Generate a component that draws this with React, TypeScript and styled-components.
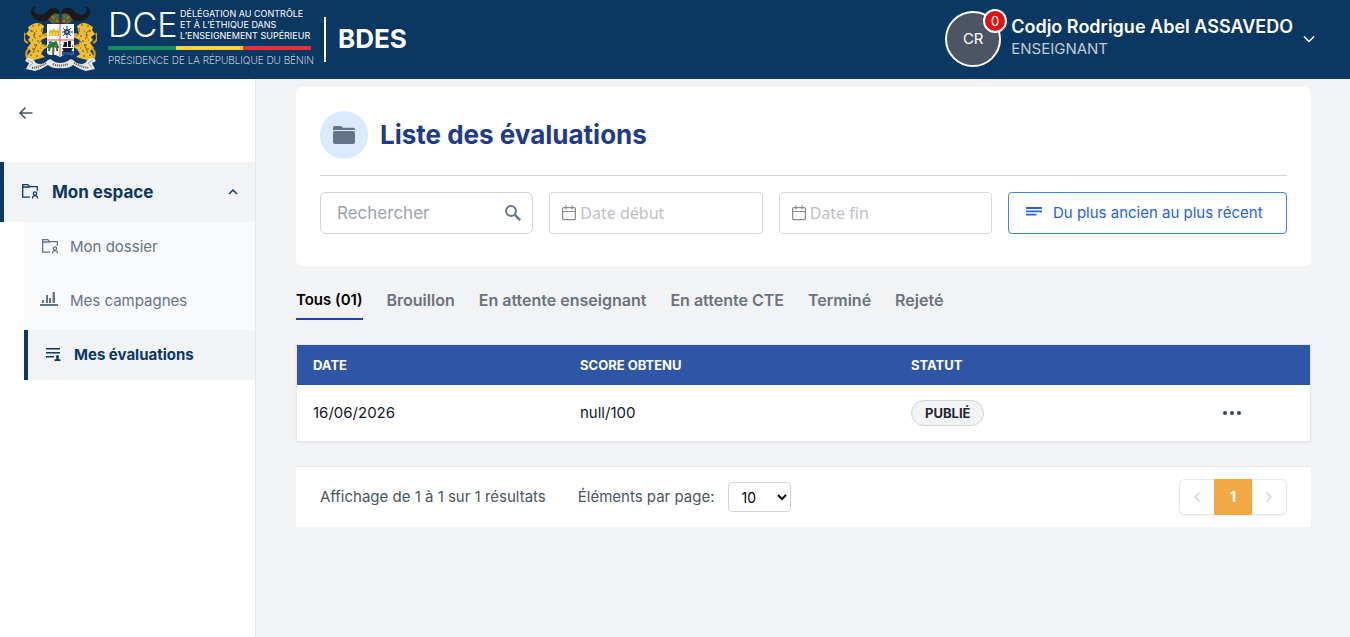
import React from "react";
import styled, { createGlobalStyle } from "styled-components";

const GlobalStyle = createGlobalStyle`
  *, *::before, *::after { box-sizing: border-box; }
  body {
    margin: 0;
    background: #f2f3f5;
    color: #111827;
    font-family: Inter, "Liberation Sans", sans-serif;
    font-size: 15px;
    line-height: 20px;
  }
  button, input, select { font: inherit; color: inherit; }
  button { cursor: pointer; }
  svg { display: block; flex: none; }
`;

const Page = styled.div`
  min-height: 100vh;
  display: flex;
  flex-direction: column;
`;

const Header = styled.header`
  display: flex;
  align-items: center;
  justify-content: space-between;
  height: 79px;
  padding: 0 35px 2px 24px;
  background: #0b3763;
  color: #fff;
`;

const Brand = styled.a`
  display: flex;
  align-items: center;
  color: inherit;
  text-decoration: none;
`;

const Wordmark = styled.div`
  width: 203px;
  margin: 0 13px 0 11px;
  padding-bottom: 4px;
`;

const WordmarkTop = styled.div`
  display: flex;
  align-items: center;
  justify-content: space-between;
  height: 34px;
  white-space: nowrap;
`;

const Acronym = styled.span`
  font-size: 34px;
  font-weight: 300;
  line-height: 34px;
`;

const Ministry = styled.span`
  width: 131px;
  font-size: 9px;
  line-height: 11px;
`;

const Flag = styled.div`
  display: grid;
  grid-template-columns: repeat(3, 1fr);
  height: 4px;
  margin: 4px 0;
`;

const Stripe = styled.span<{ $color: string }>`
  background: ${(p) => p.$color};
`;

const Presidency = styled.div`
  font-size: 10px;
  font-weight: 200;
  line-height: 12px;
  white-space: nowrap;
`;

const AppName = styled.strong`
  height: 45px;
  margin-top: 2px;
  padding-left: 12px;
  border-left: 2px solid #fff;
  font-size: 26px;
  font-weight: 700;
  line-height: 44px;
`;

const Account = styled.button`
  display: flex;
  align-items: center;
  gap: 10px;
  padding: 0;
  border: 0;
  background: none;
  text-align: left;
`;

const Avatar = styled.span`
  position: relative;
  display: grid;
  place-items: center;
  width: 56px;
  height: 56px;
  border: 2px solid #fff;
  border-radius: 50%;
  background: #4b5563;
`;

const Badge = styled.span`
  position: absolute;
  top: -4px;
  right: -8px;
  display: grid;
  place-items: center;
  width: 24px;
  height: 24px;
  border: 2px solid #fff;
  border-radius: 50%;
  background: #dc1414;
  font-size: 13px;
`;

const Identity = styled.span`
  display: flex;
  flex-direction: column;
  gap: 2px;
  padding-bottom: 2px;
`;

const UserName = styled.span`
  font-size: 18px;
  font-weight: 600;
`;

const UserRole = styled.span`
  font-size: 15px;
  color: #c3cad3;
`;

const Body = styled.div`
  flex: 1;
  display: flex;
`;

const Sidebar = styled.aside`
  flex: none;
  width: 256px;
  border-right: 1px solid #e5e7eb;
  background: #fff;
`;

const BackButton = styled.button`
  display: block;
  margin: 26px 0 41px 18px;
  padding: 0;
  border: 0;
  background: none;
  color: #4b5563;
`;

const Section = styled.button`
  display: flex;
  align-items: center;
  gap: 14px;
  width: 100%;
  height: 60px;
  padding: 0 16px;
  border: 0;
  border-left: 4px solid #0b3763;
  background: #f2f3f5;
  color: #0b3763;
  font-size: 17px;
  font-weight: 700;
  text-align: left;
`;

const SectionLabel = styled.span`
  flex: 1;
`;

const SubMenu = styled.nav`
  display: flex;
  flex-direction: column;
  gap: 4px;
  margin-left: 24px;
  background: #f9fafc;
`;

const SubLink = styled.a<{ $active?: boolean }>`
  display: flex;
  align-items: center;
  gap: 12px;
  height: 50px;
  padding-left: 16px;
  border-left: ${(p) => (p.$active ? "4px solid #0b3763" : "0")};
  background: ${(p) => (p.$active ? "#f2f3f5" : "transparent")};
  color: ${(p) => (p.$active ? "#0b3763" : "#64748b")};
  font-weight: ${(p) => (p.$active ? 700 : 400)};
  text-decoration: none;
`;

const Main = styled.main`
  flex: 1;
  min-width: 0;
  display: flex;
  flex-direction: column;
  gap: 24px;
  padding: 8px 39px 40px 40px;
`;

const Card = styled.section`
  padding: 24px 24px 32px;
  border-radius: 6px;
  background: #fff;
`;

const CardHead = styled.div`
  display: flex;
  align-items: center;
  gap: 12px;
  padding-bottom: 16px;
  margin-bottom: 16px;
  border-bottom: 1px solid #d1d5db;
`;

const RoundIcon = styled.span`
  display: grid;
  place-items: center;
  width: 48px;
  height: 48px;
  border-radius: 50%;
  background: #dbeafe;
  color: #64748b;
`;

const Title = styled.h1`
  margin: 0;
  color: #1e3a8a;
  font-size: 26px;
  font-weight: 700;
  line-height: 32px;
`;

const Filters = styled.form`
  display: grid;
  grid-template-columns: repeat(3, minmax(0, 1fr)) 279px;
  gap: 16px;
`;

const Field = styled.label<{ $search?: boolean }>`
  display: flex;
  align-items: center;
  gap: 4px;
  height: 42px;
  padding: ${(p) => (p.$search ? "0 10px 0 16px" : "0 12px")};
  border: 1px solid ${(p) => (p.$search ? "#d1d5db" : "#d9d9d9")};
  border-radius: ${(p) => (p.$search ? 6 : 4)}px;
  color: ${(p) => (p.$search ? "#64748b" : "#8c8c8c")};
`;

const TextInput = styled.input<{ $date?: boolean }>`
  flex: 1;
  min-width: 0;
  padding: 0;
  border: 0;
  outline: 0;
  background: none;
  font-family: ${(p) => (p.$date ? '"Noto Sans", sans-serif' : "inherit")};
  font-size: ${(p) => (p.$date ? 16 : 17)}px;
  &::placeholder {
    color: ${(p) => (p.$date ? "#bfbfc7" : "#9ca3af")};
    opacity: 1;
  }
`;

const SortButton = styled.button`
  display: flex;
  align-items: center;
  gap: 10px;
  padding: 0 0 0 16px;
  border: 1px solid #3b82f6;
  border-radius: 4px;
  background: #fff;
  color: #2563eb;
  white-space: nowrap;
`;

const Tabs = styled.div`
  display: flex;
  gap: 24px;
`;

const Tab = styled.button<{ $active?: boolean }>`
  padding: 0 0 8px;
  border: 0;
  border-bottom: 2px solid ${(p) => (p.$active ? "#1e40af" : "transparent")};
  background: none;
  color: ${(p) => (p.$active ? "#000" : "#6b7280")};
  font-size: ${(p) => (p.$active ? 15 : 16)}px;
  font-weight: 600;
`;

const TableFrame = styled.div`
  border: 1px solid #e5e7eb;
  background: #fff;
  box-shadow: 0 1px 2px rgba(0, 0, 0, 0.06);
`;

const Table = styled.table`
  width: 100%;
  table-layout: fixed;
  border-collapse: collapse;
`;

const HeadCell = styled.th`
  height: 40px;
  padding: 0 16px;
  background: #2f56a6;
  color: #fff;
  font-size: 13px;
  font-weight: 700;
  text-align: left;
`;

const Cell = styled.td`
  height: 56px;
  padding: 0 16px;
`;

const Status = styled.span`
  display: inline-block;
  padding: 2px 13px;
  border: 1px solid #d1d5db;
  border-radius: 13px;
  background: #f2f3f5;
  color: #1f2937;
  font-size: 13px;
  font-weight: 700;
`;

const MoreButton = styled.button`
  display: block;
  margin: 0 auto;
  padding: 0;
  border: 0;
  background: none;
  color: #374151;
`;

const Footer = styled.footer`
  display: flex;
  align-items: center;
  gap: 32px;
  padding: 12px 24px;
  border-top: 1px solid #e5e7eb;
  background: #fff;
  color: #4b5563;
`;

const PageSize = styled.label`
  display: flex;
  align-items: center;
  gap: 14px;
`;

const Select = styled.select`
  width: 63px;
  height: 30px;
  padding: 0 0 0 8px;
  border: 1px solid #d1d5db;
  border-radius: 4px;
  background: #fff;
  color: #000;
  font-size: 14px;
`;

const Pager = styled.div`
  display: flex;
  height: 36px;
  margin-left: auto;
  border-radius: 6px;
  box-shadow: 0 1px 2px rgba(0, 0, 0, 0.06);
`;

const PageButton = styled.button<{ $kind: "prev" | "current" | "next" }>`
  display: grid;
  place-items: center;
  width: ${(p) => (p.$kind === "current" ? 38 : 35)}px;
  padding: 0;
  border: ${(p) => (p.$kind === "current" ? "0" : "1px solid #e5e7eb")};
  border-left-width: ${(p) => (p.$kind === "prev" ? 1 : 0)}px;
  border-right-width: ${(p) => (p.$kind === "next" ? 1 : 0)}px;
  border-radius: ${(p) =>
    p.$kind === "prev" ? "6px 0 0 6px" : p.$kind === "next" ? "0 6px 6px 0" : "0"};
  background: ${(p) => (p.$kind === "current" ? "#f2a945" : "#fff")};
  color: ${(p) => (p.$kind === "current" ? "#fff" : "#d1d5db")};
  font-weight: 700;
`;

function Leopard() {
  return (
    <g>
      <path
        d="M20 20 Q15 15 9 18 L4 21 L5 24 L2 28 L6 31 L4 34 L7 37 L3 42 L7 45 L2 51 L6 55 L14 53 L21 51 L17 48 L20 43 L24 41 L18 38 L17 34 L24 31 L23 27 L18 28 Z"
        fill="#efbd35"
      />
      <path
        d="M1 27 Q-2 34 4 37 M5 42 Q0 47 4 54 M18 29 L23 29 M17 39 L23 40"
        fill="none"
        stroke="#d99a20"
        strokeWidth="2"
      />
      <path
        d="M8 20h2M14 19h2M17 23h3M6 25h2M12 25h1M9 29h2M15 30h2M8 34h1M13 35h2M10 39h2M16 42h1M8 43h2M13 45h2M6 49h2M12 50h2M17 25h1M11 32h1"
        stroke="#70501b"
        strokeWidth="1"
      />
      <path d="M7 24 L11 27 L10 32 M13 38 L9 47 M18 34 L15 37" fill="none" stroke="#8b6115" strokeWidth="1" />
    </g>
  );
}

function Horn() {
  return (
    <g>
      <path d="M25 8 Q31 4 35 7 L36 17 L29 18 L24 14 Z" fill="#6b4a2c" />
      <path d="M31 8 L35 9 L33 14 L29 11 Z M26 14 L30 13 L31 17 L27 17 Z" fill="#317a3a" />
      <path d="M28 10 L30 13 M32 14 L34 16" stroke="#b66b3e" strokeWidth="2" />
      <path
        d="M11 0 C5 3 6 11 13 14 C19 17 25 14 26 11 C28 8 32 6 35 8 C36 5 34 3 31 2 C27 1 24 4 21 7 C17 10 11 9 10 5 Q10 3 12 1 Z"
        fill="#1b1a1a"
      />
    </g>
  );
}

function CoatOfArms() {
  return (
    <svg width="73" height="66" viewBox="0 0 73 66" aria-hidden="true">
      <Leopard />
      <g transform="matrix(-1 0 0 1 73 0)">
        <Leopard />
      </g>
      <Horn />
      <g transform="matrix(-1 0 0 1 73 0)">
        <Horn />
      </g>
      <path d="M23 18 H50 V46 Q50 49 45 49 H40 L36 51 L32 49 H27 Q23 49 23 46 Z" fill="#fff" />
      <path d="M38 45 H50 Q50 49 45 49 H40 L38 50 Z" fill="#1d5191" />
      <path d="M25 30 V25 L27 23 L28 25 L30 22 L32 25 L34 23 L35 25 V30 Z" fill="#e7b51c" />
      <path d="M27 27v3M30 26v4M33 27v3" stroke="#fff1ad" strokeWidth="1" />
      <path d="M43 20v12M38 26h11M39 22l8 8M47 22l-8 8" stroke="#284983" strokeWidth="1" />
      <circle cx="43" cy="26" r="3" fill="#284983" />
      <circle cx="43" cy="26" r="1" fill="#e9c64a" />
      <path d="M29 38 Q30 43 29 49" fill="none" stroke="#7b552f" strokeWidth="2" />
      <path
        d="M29 40 Q25 36 24 42 M29 40 Q25 40 25 45 M29 40 Q33 35 34 42 M29 40 Q34 40 33 45 M29 39 Q28 35 25 37 M29 39 Q31 35 33 37"
        fill="none"
        stroke="#1c7937"
        strokeWidth="2"
      />
      <path d="M38 42 H49 L47 46 H40 Z M40 36h3v5h-4zM44 35h3v6h-3zM48 38l1 3h-1z" fill="#172136" />
      <path d="M36 18v32M23 34h27" stroke="#ed4244" strokeWidth="1" />
      <path
        d="M3 52 Q9 52 12 57 Q18 60 24 54 Q27 52 29 55 Q36 59 44 55 Q46 52 49 54 Q55 60 61 57 Q64 52 70 52 L72 55 L68 57 L71 63 L62 65 Q55 63 49 59 Q44 63 36 62 Q29 63 24 59 Q18 63 11 65 L2 63 L5 57 L1 55 Z"
        fill="#e6e6e6"
      />
      <path
        d="M8 62 Q15 61 23 57 M29 58 Q36 61 44 58 M50 57 Q58 61 65 62"
        fill="none"
        stroke="#555"
        strokeWidth="2"
        strokeDasharray="1 1"
      />
      <path d="M4 54 L9 57 L5 61 M69 54 L64 57 L68 61" fill="none" stroke="#a9a9a9" strokeWidth="1" />
    </svg>
  );
}

function FolderUserIcon() {
  return (
    <svg width="18" height="18" viewBox="-2 1 18 18" fill="none" stroke="currentColor" aria-hidden="true">
      <path d="M8 15.200H.700V2.600h5l2 2h7.600v4.200M.700 5h7" strokeWidth="1.300" />
      <circle cx="13" cy="11.500" r="1.700" strokeWidth="1.200" />
      <path d="M10.600 16.400v-1q0-1.500 1.500-1.500h1.800q1.500 0 1.500 1.500v1" strokeWidth="1.200" />
    </svg>
  );
}

function BarsIcon() {
  return (
    <svg width="18" height="18" viewBox="0 0 18 18" fill="currentColor" aria-hidden="true">
      <path d="M0 12h18v2H0zM2 8h2v3H2zM6 3h2v8H6zM9 6h2v5H9zM12.500 0H15v11h-2.500z" />
    </svg>
  );
}

function EvaluationIcon() {
  return (
    <svg width="18" height="18" viewBox="0 0 18 18" fill="currentColor" aria-hidden="true">
      <path d="M2 2h14v1.500H2zM2 6h14v1.500H2zM2 10h8v1.500H2z" />
      <circle cx="13.500" cy="10.500" r="1.500" />
      <path d="M12.600 11h1.800l.5 2.200h1.600V15h-6v-1.800h1.600z" />
    </svg>
  );
}

function ArrowLeftIcon() {
  return (
    <svg width="16" height="16" viewBox="0 0 16 16" fill="none" stroke="currentColor" strokeWidth="1.600" aria-hidden="true">
      <path d="M14.500 8H2M7.500 2.500 2 8l5.500 5.500" />
    </svg>
  );
}

function Chevron({ d }: { d: string }) {
  return (
    <svg width="12" height="12" viewBox="0 0 12 12" fill="none" stroke="currentColor" strokeWidth="1.500" aria-hidden="true">
      <path d={d} />
    </svg>
  );
}

function FolderIcon() {
  return (
    <svg width="22" height="18" viewBox="0 0 22 18" fill="currentColor" aria-hidden="true">
      <path d="M0 3.600V2Q0 0 2 0h5q1 0 1.600.6L10 1.800h10q2 0 2 1.800V4H2Q.8 4 0 4.600z" />
      <path d="M0 7q0-2 2-2h18q2 0 2 2v9q0 2-2 2H2q-2 0-2-2z" />
    </svg>
  );
}

function SearchIcon() {
  return (
    <svg width="18" height="18" viewBox="0 0 18 18" fill="none" stroke="currentColor" aria-hidden="true">
      <circle cx="7" cy="7" r="4.900" strokeWidth="2" />
      <path d="M10.800 10.800l5.400 5.400" strokeWidth="2.400" />
    </svg>
  );
}

function CalendarIcon() {
  return (
    <svg width="14" height="16" viewBox="0 0 14 16" fill="none" stroke="currentColor" strokeWidth="1.200" aria-hidden="true">
      <rect x="0.600" y="2.600" width="12.800" height="12" rx="1" />
      <path d="M.6 6.500h12.800M4 0.500v4M10 0.500v4" />
    </svg>
  );
}

function SortIcon() {
  return (
    <svg width="18" height="16" viewBox="0 0 18 16" fill="currentColor" aria-hidden="true">
      <path d="M1 2h16v2H1zM1 5.500h16v1.800H1zM1 8.800h10.500v1.800H1z" />
    </svg>
  );
}

function DotsIcon() {
  return (
    <svg width="20" height="20" viewBox="0 0 20 20" fill="currentColor" aria-hidden="true">
      <circle cx="3" cy="10" r="2" />
      <circle cx="10" cy="10" r="2" />
      <circle cx="17" cy="10" r="2" />
    </svg>
  );
}

const tabs = ["Tous (01)", "Brouillon", "En attente enseignant", "En attente CTE", "Terminé", "Rejeté"];

const evaluations = [{ date: "16/06/2026", score: "null/100", status: "PUBLIÉ" }];

export default function App() {
  return (
    <Page>
      <GlobalStyle />
      <Header>
        <Brand href="#">
          <CoatOfArms />
          <Wordmark>
            <WordmarkTop>
              <Acronym>DCE</Acronym>
              <Ministry>
                DÉLÉGATION AU CONTRÔLE
                <br />
                ET À L’ÉTHIQUE DANS
                <br />
                L’ENSEIGNEMENT SUPÉRIEUR
              </Ministry>
            </WordmarkTop>
            <Flag>
              <Stripe $color="#138a5b" />
              <Stripe $color="#fccf3a" />
              <Stripe $color="#e8303c" />
            </Flag>
            <Presidency>PRÉSIDENCE DE LA RÉPUBLIQUE DU BÉNIN</Presidency>
          </Wordmark>
          <AppName>BDES</AppName>
        </Brand>
        <Account type="button">
          <Avatar>
            CR
            <Badge>0</Badge>
          </Avatar>
          <Identity>
            <UserName>Codjo Rodrigue Abel ASSAVEDO</UserName>
            <UserRole>ENSEIGNANT</UserRole>
          </Identity>
          <Chevron d="M1 3.500l5 5 5-5" />
        </Account>
      </Header>
      <Body>
        <Sidebar>
          <BackButton type="button" aria-label="Réduire le menu">
            <ArrowLeftIcon />
          </BackButton>
          <Section type="button" aria-expanded="true">
            <FolderUserIcon />
            <SectionLabel>Mon espace</SectionLabel>
            <Chevron d="M2 8l4-4 4 4" />
          </Section>
          <SubMenu>
            <SubLink href="#dossier">
              <FolderUserIcon />
              Mon dossier
            </SubLink>
            <SubLink href="#campagnes">
              <BarsIcon />
              Mes campagnes
            </SubLink>
            <SubLink href="#evaluations" $active aria-current="page">
              <EvaluationIcon />
              Mes évaluations
            </SubLink>
          </SubMenu>
        </Sidebar>
        <Main>
          <Card>
            <CardHead>
              <RoundIcon>
                <FolderIcon />
              </RoundIcon>
              <Title>Liste des évaluations</Title>
            </CardHead>
            <Filters>
              <Field $search>
                <TextInput type="text" placeholder="Rechercher" aria-label="Rechercher" />
                <SearchIcon />
              </Field>
              <Field>
                <CalendarIcon />
                <TextInput $date type="text" placeholder="Date début" aria-label="Date début" />
              </Field>
              <Field>
                <CalendarIcon />
                <TextInput $date type="text" placeholder="Date fin" aria-label="Date fin" />
              </Field>
              <SortButton type="button">
                <SortIcon />
                Du plus ancien au plus récent
              </SortButton>
            </Filters>
          </Card>
          <Tabs role="tablist">
            {tabs.map((label, i) => (
              <Tab key={label} type="button" role="tab" aria-selected={i === 0} $active={i === 0}>
                {label}
              </Tab>
            ))}
          </Tabs>
          <TableFrame>
            <Table>
              <colgroup>
                <col width="267" />
                <col width="331" />
                <col width="259" />
                <col width="156" />
              </colgroup>
              <thead>
                <tr>
                  <HeadCell scope="col">DATE</HeadCell>
                  <HeadCell scope="col">SCORE OBTENU</HeadCell>
                  <HeadCell scope="col">STATUT</HeadCell>
                  <HeadCell scope="col" aria-label="Actions" />
                </tr>
              </thead>
              <tbody>
                {evaluations.map((row) => (
                  <tr key={row.date}>
                    <Cell>{row.date}</Cell>
                    <Cell>{row.score}</Cell>
                    <Cell>
                      <Status>{row.status}</Status>
                    </Cell>
                    <Cell>
                      <MoreButton type="button" aria-label="Plus d’actions">
                        <DotsIcon />
                      </MoreButton>
                    </Cell>
                  </tr>
                ))}
              </tbody>
            </Table>
          </TableFrame>
          <Footer>
            <span>Affichage de 1 à 1 sur 1 résultats</span>
            <PageSize>
              Éléments par page:
              <Select defaultValue="10">
                <option>10</option>
                <option>25</option>
                <option>50</option>
              </Select>
            </PageSize>
            <Pager>
              <PageButton type="button" $kind="prev" aria-label="Page précédente">
                <Chevron d="M8.500 1.500L4 6l4.500 4.500" />
              </PageButton>
              <PageButton type="button" $kind="current" aria-current="page">
                1
              </PageButton>
              <PageButton type="button" $kind="next" aria-label="Page suivante">
                <Chevron d="M3.500 1.500L8 6l-4.500 4.500" />
              </PageButton>
            </Pager>
          </Footer>
        </Main>
      </Body>
    </Page>
  );
}
